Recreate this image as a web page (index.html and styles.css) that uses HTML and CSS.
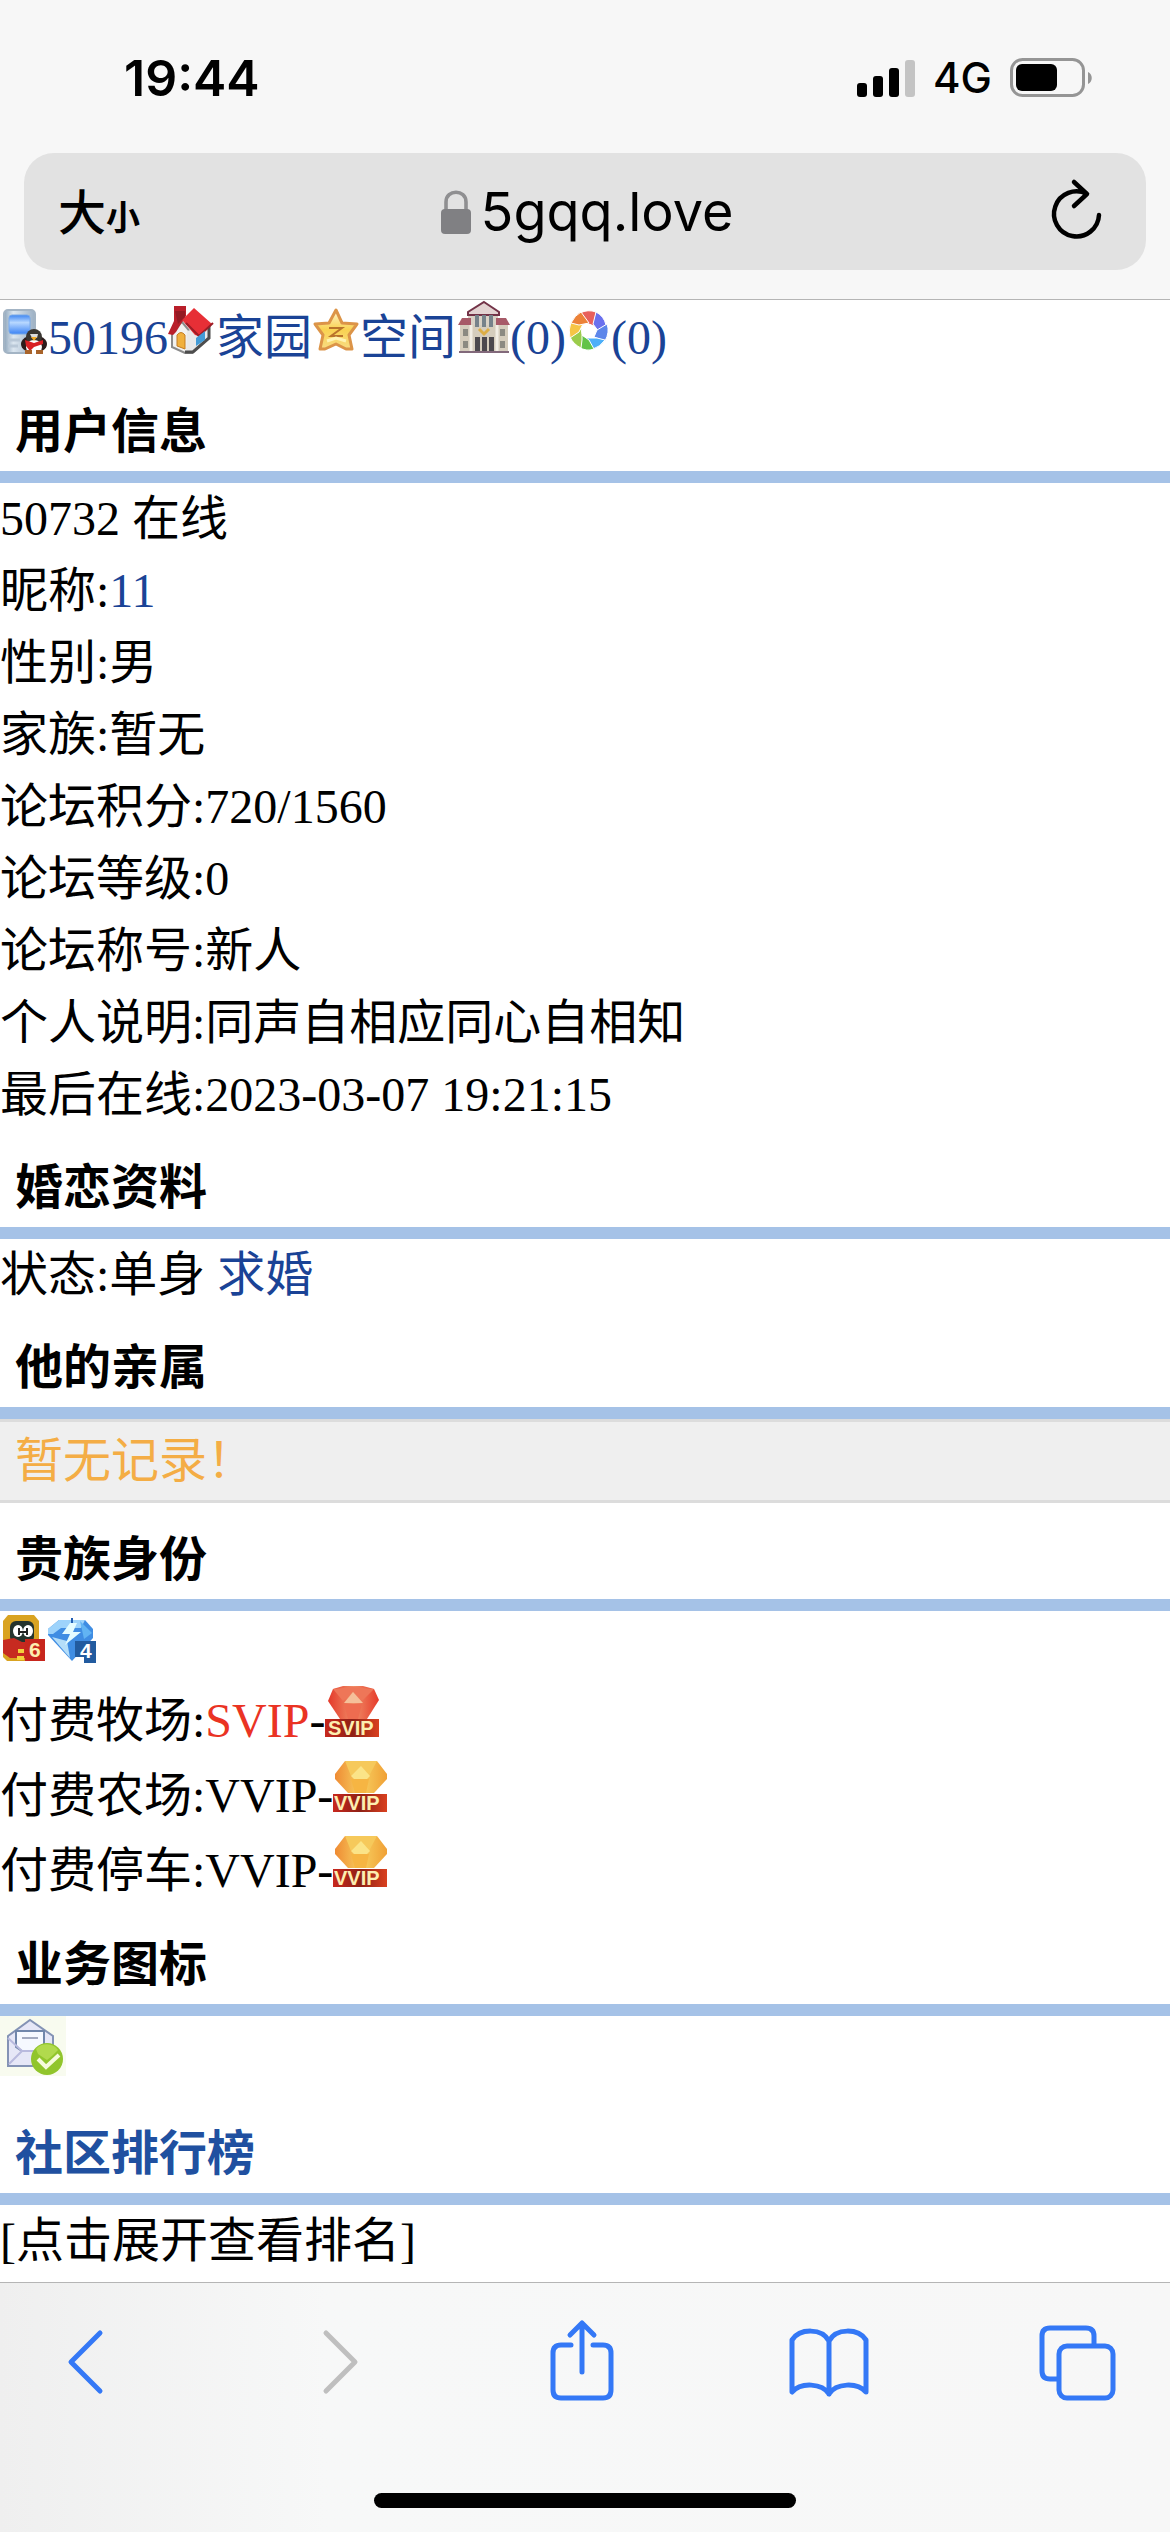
FILE: index.html
```html
<!DOCTYPE html>
<html lang="zh-CN">
<head>
    <meta charset="UTF-8">
    <meta name="viewport" content="width=device-width, initial-scale=1">
    <title>用户信息</title>
    <link rel="stylesheet" href="styles.css">
</head>
<body>

<!-- shared drawings -->
<svg class="defs" aria-hidden="true">
    <defs>
        <linearGradient id="gold" x1="0" x2="1">
            <stop offset="0" stop-color="#ef8b33"/>
            <stop offset=".5" stop-color="#f7cf60"/>
            <stop offset="1" stop-color="#f0a035"/>
        </linearGradient>
        <linearGradient id="ruby" x1="0" x2="1">
            <stop offset="0" stop-color="#e4392a"/>
            <stop offset=".5" stop-color="#f08c66"/>
            <stop offset="1" stop-color="#e63b2b"/>
        </linearGradient>
        <linearGradient id="plate" x1="0" x2="1">
            <stop offset="0" stop-color="#c8281e"/>
            <stop offset=".5" stop-color="#8e2015"/>
            <stop offset="1" stop-color="#d9401f"/>
        </linearGradient>
        <linearGradient id="phone" x1="0" x2="1">
            <stop offset="0" stop-color="#8fa6bb"/>
            <stop offset=".3" stop-color="#dbe6f0"/>
            <stop offset="1" stop-color="#9cb0c4"/>
        </linearGradient>
        <linearGradient id="screen" x1="0" y1="0" x2="0" y2="1">
            <stop offset="0" stop-color="#3f86f2"/>
            <stop offset=".4" stop-color="#b8d8ff"/>
            <stop offset="1" stop-color="#3c83f5"/>
        </linearGradient>
        <linearGradient id="star" x1="0" y1="0" x2="0" y2="1">
            <stop offset="0" stop-color="#fff6d0"/>
            <stop offset=".5" stop-color="#f9d251"/>
            <stop offset="1" stop-color="#f8dc83"/>
        </linearGradient>
        <symbol id="vvip" viewBox="0 0 54 54">
            <path d="M12 3H44L54 16V21L41 35H15L2 21V16Z" fill="url(#gold)"/>
            <path d="M12 3H44L36 18L28 8L18 18Z" fill="#f6c95b"/>
            <path d="M28 8L37 18L33 22H22L18 18Z" fill="#fbe488"/>
            <path d="M18 21H36L33 35H22Z" fill="#f6b543"/>
            <path d="M0 36H54V54H0Z" fill="url(#plate)"/>
            <text x="1" y="52" font-size="20" class="badge-text">VVIP</text>
        </symbol>
    </defs>
</svg>

<header class="top">
    <div class="status">
        <span class="time">19:44</span>
        <div class="status-icons">
            <svg width="58" height="38" viewBox="0 0 58 38">
                <rect x="0" y="24" width="10" height="14" rx="3"/>
                <rect x="16" y="17" width="10" height="21" rx="3"/>
                <rect x="32" y="9" width="10" height="29" rx="3"/>
                <rect x="48" y="1" width="10" height="37" rx="3" fill="#c4c4c4"/>
            </svg>
            <span class="network">4G</span>
            <svg width="82" height="40" viewBox="0 0 82 40">
                <rect x="1.5" y="1.5" width="72" height="36" rx="11" fill="none" stroke="#959595" stroke-width="3"/>
                <rect x="6" y="6" width="41" height="27" rx="6"/>
                <path d="M78 14C83 16 83 24 78 26Z" fill="#959595"/>
            </svg>
        </div>
    </div>
    <div class="address">
        <button class="text-size" type="button"><span>大</span><span class="small">小</span></button>
        <div class="site">
            <svg width="30" height="44" viewBox="0 0 30 44">
                <path d="M5 22V12C5 -1 25 -1 25 12V22" fill="none" stroke="#8f8f91" stroke-width="3.6"/>
                <rect x="0" y="19" width="30" height="25" rx="4" fill="#808083"/>
            </svg>
            <span>5gqq.love</span>
        </div>
        <button class="reload" type="button" aria-label="刷新">
            <svg width="66" height="62" viewBox="0 0 66 62" fill="none" stroke="#000" stroke-width="4.5" stroke-linecap="round" stroke-linejoin="round">
                <path d="M49 36A22.500 22.500 0 1 1 37 15M24 3L37 15L24 27"/>
            </svg>
        </button>
    </div>
</header>

<main class="page">
    <nav class="row tall">
        <a href="#"><svg width="48" height="48" viewBox="0 0 48 48">
            <rect x="4" y="4" width="31" height="43" rx="4" fill="url(#phone)" stroke="#a3b4c4" stroke-width="2"/>
            <rect x="9" y="9" width="21" height="19" rx="3" fill="url(#screen)" stroke="#79a9e8"/>
            <path d="M8 34H20M8 40H18" stroke="#b9c8d7" stroke-width="3"/>
            <ellipse cx="34" cy="38" rx="13" ry="9" fill="#2b1b1b"/>
            <circle cx="34" cy="31" r="8" fill="#3a3632"/>
            <ellipse cx="34" cy="41" rx="8" ry="7" fill="#fff"/>
            <path d="M30 28L32 32H37L38 28Z" fill="#ddd"/>
            <path d="M31 31H37L34 35Z" fill="#f2ab28"/>
            <path d="M25 34L34 37L43 34V38L34 41L30 45L26 40Z" fill="#d81f24"/>
            <path d="M25 46H32M36 46H43" stroke="#a8632a" stroke-width="4"/>
        </svg>50196</a><a href="#"><svg width="48" height="48" viewBox="0 0 48 48">
            <path d="M4 24L14 16L24 28V47H17L4 41Z" fill="#f2f2f0" stroke="#8b8b8b" stroke-width="2"/>
            <path d="M19 25L40 19V32L24 46H18Z" fill="#e9e9e9"/>
            <path d="M41 20V32L25 46H17" fill="none" stroke="#4d4d4d" stroke-width="3"/>
            <path d="M0 28L6 15V0H18V10L8 26L5 29Z" fill="#b91f2a"/>
            <path d="M14 14L26 2L44 18L31 30L27 29Z" fill="#e72f36"/>
            <path d="M18 17L31 30L45 17" fill="none" stroke="#9c1c26" stroke-width="2"/>
            <path d="M7 5H17V11L10 18Z" fill="#941b24"/>
            <path d="M9 29Q13 24 17 29V43L9 40Z" fill="#f0b03d" stroke="#c47c22"/>
            <path d="M28 32L37 25V34L28 40Z" fill="#439bd6"/>
        </svg>家园</a><a href="#"><svg width="48" height="48" viewBox="0 0 48 48">
            <path d="M24 4L30 17L45 18L37 29L40 43L34 43L24 38L13 43H8L11 29L3 18L17 17Z" fill="url(#star)" stroke="#dc9448" stroke-width="3" stroke-linejoin="round"/>
            <path d="M17 22H30L19 30H31" fill="none" stroke="#b9742b" stroke-width="2"/>
            <path d="M15 35L24 32L34 35" fill="none" stroke="#fff3b2" stroke-width="3"/>
        </svg>空间</a><a href="#"><svg width="54" height="54" viewBox="0 0 54 54">
            <path d="M12 12H42V52H12Z" fill="#d9d2c6"/>
            <path d="M4 25H52V52H4Z" fill="#d5cdbd"/>
            <path d="M28 2L43 12V15H12V12Z" fill="#e3d3d2" stroke="#733348" stroke-width="2"/>
            <path d="M6 18H15V25H2ZM40 18H50L54 25H40Z" fill="#a75a68"/>
            <path d="M19 15H23V27H19ZM26 15H30V27H26ZM33 15H37V27H33Z" fill="#76828a"/>
            <path d="M19 37H24V51H19ZM26 37H31V51H26ZM33 37H38V51H33Z" fill="#4c494e"/>
            <path d="M7 29H12V36H7ZM44 29H49V36H44ZM7 41H12V48H7ZM44 41H49V48H44Z" fill="#8b8a82"/>
            <path d="M15 25V52M41 25V52" stroke="#f2eee5" stroke-width="3"/>
            <path d="M23 29L28 34L33 29" fill="none" stroke="#dcae46" stroke-width="3"/>
            <path d="M3 52H53" stroke="#82697b" stroke-width="2"/>
        </svg>(0)</a><a href="#"><svg width="45" height="48" viewBox="0 0 45 48">
            <g stroke="#fff" stroke-width="1">
                <path d="M14 7Q22 3 30 6L28 20L15 15Z" fill="#e8605c"/>
                <path d="M30 6Q38 10 40 19L33 26L27 18Z" fill="#6a70ee"/>
                <path d="M41 18Q44 26 39 35L28 31L31 24Z" fill="#5d86ea"/>
                <path d="M39 34Q34 41 27 43L20 32H31Z" fill="#4daff8"/>
                <path d="M28 43Q20 46 13 41V27L23 34Z" fill="#62c348"/>
                <path d="M15 42Q7 38 4 31L16 22V34Z" fill="#9bcc4b"/>
                <path d="M4 32Q2 24 5 16L17 18L13 26Z" fill="#f6c545"/>
                <path d="M5 17Q9 9 15 6L23 17L13 19Z" fill="#ec8238"/>
            </g>
            <circle cx="22" cy="25" r="7" fill="#fff"/>
        </svg>(0)</a>
    </nav>

    <h2 class="title">用户信息</h2>
    <div class="row">50732 在线</div>
    <div class="row">昵称:<a href="#">11</a></div>
    <div class="row">性别:男</div>
    <div class="row">家族:暂无</div>
    <div class="row">论坛积分:720/1560</div>
    <div class="row">论坛等级:0</div>
    <div class="row">论坛称号:新人</div>
    <div class="row">个人说明:同声自相应同心自相知</div>
    <div class="row">最后在线:2023-03-07 19:21:15</div>

    <h2 class="title">婚恋资料</h2>
    <div class="row">状态:单身 <a href="#">求婚</a></div>

    <h2 class="title">他的亲属</h2>
    <div class="notice">暂无记录！</div>

    <h2 class="title">贵族身份</h2>
    <div class="row"><svg width="48" height="48" viewBox="0 0 48 48">
            <path d="M8 0H34L39 6V42L35 46H7L3 42V6Z" fill="#d9a321"/>
            <rect x="10" y="6" width="24" height="22" rx="6" fill="#24332d"/>
            <ellipse cx="18" cy="16" rx="5" ry="6" fill="#fff"/>
            <ellipse cx="28" cy="16" rx="5" ry="6" fill="#fff"/>
            <path d="M19 13V20M27 13V20M18 17H28" stroke="#222" stroke-width="2"/>
            <path d="M3 25L14 23L22 27H39V34L25 43H10L3 38Z" fill="#c72a20"/>
            <path d="M18 34H24V38H18ZM17 41H24V45H17Z" fill="#f4d23c"/>
            <rect x="25" y="24" width="20" height="22" fill="#c7261d"/>
            <text x="29" y="42" font-size="21" class="badge-text">6</text>
        </svg><svg width="48" height="48" viewBox="0 0 48 48">
            <path d="M11 5H37L45 14V23L24 46L0 20V14Z" fill="#3f8de3"/>
            <path d="M11 5H37L33 13H13L5 19H0V14Z" fill="#9dd3fb"/>
            <path d="M4 22L22 43L19 26Z" fill="#b4def9"/>
            <path d="M32 6L44 18L36 24Z" fill="#62b4f3"/>
            <path d="M24 3V17" stroke="#225eb3" stroke-width="2"/>
            <path d="M22 8L14 19H22L17 30L33 17H25L29 8Z" fill="#e3fbff"/>
            <path d="M27 26H48V48H36V42H27Z" fill="#225b9f"/>
            <text x="32" y="43" font-size="21" class="badge-text white">4</text>
        </svg></div>
    <div class="row tall">付费牧场:<span class="svip">SVIP</span>-<svg width="54" height="54" viewBox="0 0 54 54">
            <path d="M18 3H38L49 6L54 17L42 36H15L3 18L8 6Z" fill="url(#ruby)"/>
            <path d="M8 6L28 4L49 6L37 18L28 9L18 18Z" fill="#ee7658"/>
            <path d="M28 9L38 20H19Z" fill="#f5c09a"/>
            <path d="M19 21H37L33 36H23Z" fill="#ee6c50"/>
            <path d="M0 36H54V54H0Z" fill="url(#plate)"/>
            <text x="3" y="52" font-size="20" class="badge-text">SVIP</text>
        </svg></div>
    <div class="row tall">付费农场:VVIP-<svg width="54" height="54"><use href="#vvip"/></svg></div>
    <div class="row tall">付费停车:VVIP-<svg width="54" height="54"><use href="#vvip"/></svg></div>

    <h2 class="title">业务图标</h2>
    <div class="row mail"><svg width="66" height="60" viewBox="0 0 66 60">
            <rect width="66" height="60" fill="#f8fbef"/>
            <path d="M8 20L30 4L53 20V50H8Z" fill="#e6e7f7" stroke="#8493b5" stroke-width="2"/>
            <path d="M16 15H44V32L38 35H22L16 31Z" fill="#f6f9ff" stroke="#7187ab" stroke-width="2"/>
            <path d="M22 22H38" stroke="#a4abc0" stroke-width="2"/>
            <path d="M9 48L22 35M8 22L22 35H38" fill="none" stroke="#b9bade" stroke-width="2"/>
            <circle cx="47" cy="43" r="16" fill="#91c52c"/>
            <path d="M36 33A14 14 0 0 1 58 34L52 40L47 44L38 38Z" fill="#b1da4d"/>
            <path d="M38 43L46 51L59 39" fill="none" stroke="#f6fbdc" stroke-width="4"/>
        </svg></div>

    <h2 class="title"><a href="#">社区排行榜</a></h2>
    <div class="row">[点击展开查看排名]</div>
</main>

<footer class="bottom">
    <div class="toolbar">
        <button type="button" aria-label="后退">
            <svg width="80" height="84" viewBox="0 0 80 84"><path d="M55 15L26 44L55 73"/></svg>
        </button>
        <button type="button" aria-label="前进" disabled>
            <svg width="80" height="84" viewBox="0 0 80 84"><path d="M33 15L62 44L33 73"/></svg>
        </button>
        <button type="button" aria-label="分享">
            <svg width="80" height="84" viewBox="0 0 80 84"><path d="M30 27H20Q12 27 12 35V72Q12 80 20 80H62Q70 80 70 72V35Q70 27 62 27H52M41 54V5M29 17L41 5L53 17"/></svg>
        </button>
        <button type="button" aria-label="书签">
            <svg width="80" height="84" viewBox="0 0 80 84"><path d="M40 76C33 65 12 64 3 74V22C11 10 33 10 40 23C47 10 69 10 77 22V74C68 64 47 65 40 76ZM40 23V76"/></svg>
        </button>
        <button type="button" aria-label="标签页">
            <svg width="80" height="84" viewBox="0 0 80 84"><path d="M20 61H13Q5 61 5 53V18Q5 10 13 10H49Q57 10 57 18V26"/><rect x="22" y="28" width="54" height="52" rx="8"/></svg>
        </button>
    </div>
    <div class="home-bar"></div>
</footer>

</body>
</html>
```

FILE: styles.css
```css
* {
    box-sizing: border-box;
}
body {
    margin: 0;
    min-height: 100vh;
    display: flex;
    flex-direction: column;
    background: #fff;
    color: #000;
    font-family: "Liberation Serif", "Noto Sans CJK SC", serif;
    font-size: 48px;
    line-height: 72px;
}
a {
    color: #1a4396;
    text-decoration: none;
}
button {
    border: none;
    background: none;
    padding: 0;
    color: inherit;
    cursor: pointer;
}
svg {
    overflow: visible;
}
.defs {
    position: absolute;
    width: 0;
    height: 0;
}

/* status bar and address bar */
.top {
    background: #f7f7f7;
    border-bottom: 1px solid #b5b5b5;
    padding: 42px 24px 29px;
    font-family: Inter, "Noto Sans CJK SC", sans-serif;
}
.status {
    display: flex;
    justify-content: space-between;
    align-items: center;
    padding: 0 54px 0 100px;
    margin-bottom: 39px;
}
.time {
    font-size: 50px;
    font-weight: 600;
}
.status-icons {
    display: flex;
    align-items: center;
    gap: 18px;
}
.network {
    font-size: 42px;
    font-weight: 500;
}
.address {
    display: grid;
    grid-template-columns: 1fr auto 1fr;
    align-items: center;
    height: 117px;
    padding: 0 30px 0 34px;
    border-radius: 30px;
    background: #e2e2e2;
}
.text-size {
    justify-self: start;
    display: flex;
    align-items: baseline;
    padding-bottom: 6px;
    font-family: inherit;
    font-size: 48px;
    font-weight: 500;
}
.text-size .small {
    font-size: 34px;
    font-weight: 700;
}
.site {
    display: flex;
    align-items: center;
    gap: 10px;
    font-size: 54px;
}
.reload {
    justify-self: end;
    display: flex;
    padding-bottom: 4px;
}

/* page content */
.page {
    flex: 1;
}
.row {
    min-height: 72px;
}
.row.tall {
    min-height: 75px;
}
.row.mail {
    min-height: 81px;
}
.title {
    margin: 0;
    padding: 21px 15px 3px;
    border-bottom: 12px solid #a5c2e7;
    font-size: 48px;
    font-weight: 700;
}
.title a {
    color: #2050a0;
}
.notice {
    padding: 3px 15px;
    border-top: 3px solid #dcdcdc;
    border-bottom: 3px solid #dcdcdc;
    background: #efefef;
    color: #f4ad45;
}
.svip {
    color: #ea3323;
}
.badge-text {
    font-family: "Liberation Sans", sans-serif;
    font-weight: 700;
    fill: #fdeeb0;
}
.badge-text.white {
    fill: #fff;
}

/* browser toolbar */
.bottom {
    display: flex;
    flex-direction: column;
    align-items: center;
    border-top: 1px solid #b5b5b5;
    background: linear-gradient(to right, #efefef, #f7f8f8 28%, #f7f7f7);
    padding-bottom: 24px;
}
.toolbar {
    width: 100%;
    display: flex;
    justify-content: space-between;
    padding: 35px 53px 91px 45px;
}
.toolbar button {
    display: flex;
    color: #3478f6;
}
.toolbar button:disabled {
    color: #bfbfbf;
}
.toolbar svg {
    fill: none;
    stroke: currentColor;
    stroke-width: 5;
    stroke-linecap: round;
    stroke-linejoin: round;
}
.home-bar {
    width: 36%;
    height: 15px;
    border-radius: 8px;
    background: #000;
}
```
